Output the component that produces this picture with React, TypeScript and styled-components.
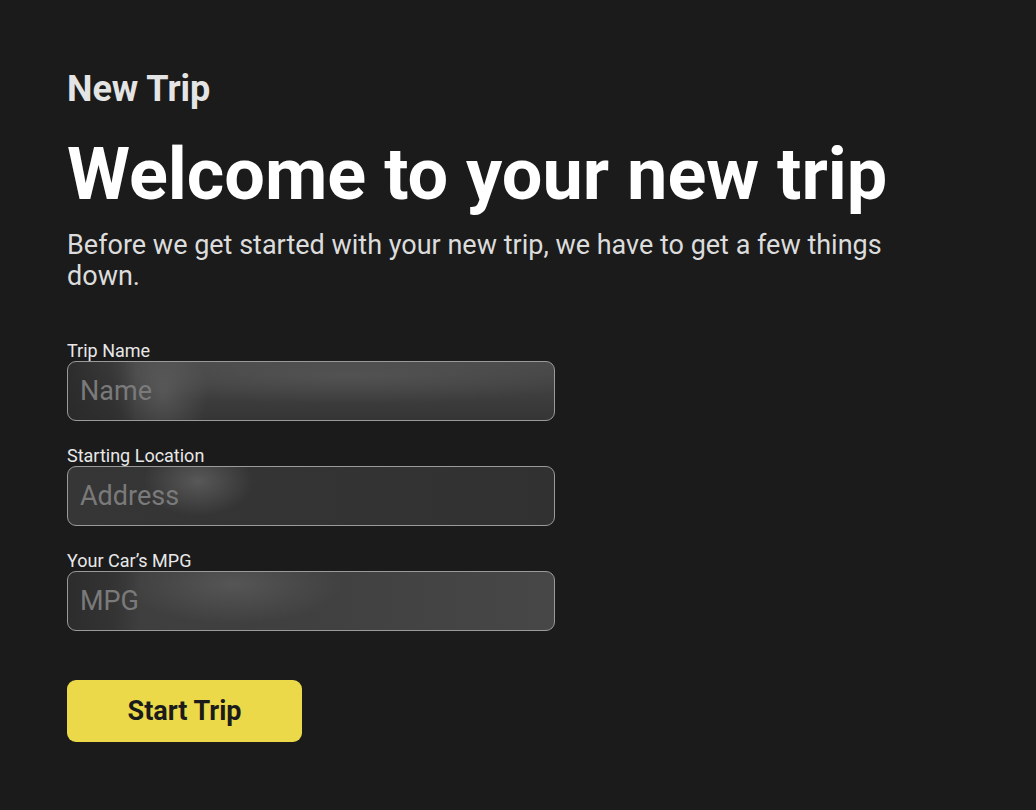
import React from "react";
import styled, { createGlobalStyle } from "styled-components";

const GlobalStyle = createGlobalStyle`
  html, body {
    margin: 0;
    padding: 0;
    background: #1b1b1b;
  }
  body {
    font-family: Roboto, "Liberation Sans", Arial, sans-serif;
    color: #e6e6e6;
  }
`;

const Page = styled.main`
  min-height: 810px;
  box-sizing: border-box;
  padding: 68px 67px 40px;
  display: flex;
  flex-direction: column;
  align-items: flex-start;
`;

const Eyebrow = styled.h2`
  margin: 0;
  font-size: 36px;
  font-weight: 700;
  line-height: 42px;
  color: #e4e4e4;
`;

const Headline = styled.h1`
  margin: 23px 0 0;
  font-size: 72px;
  font-weight: 700;
  line-height: 84px;
  color: #ffffff;
`;

const Intro = styled.p`
  margin: 13px 0 0;
  max-width: 830px;
  font-size: 27px;
  line-height: 31px;
  color: #dcdcdc;
`;

const Form = styled.form`
  margin-top: 48px;
  display: flex;
  flex-direction: column;
  gap: 24px;
  width: 488px;
`;

const Field = styled.label`
  display: flex;
  flex-direction: column;
`;

const FieldLabel = styled.span`
  font-size: 18px;
  line-height: 21px;
  color: #e8e8e8;
`;

const glows: Record<string, string> = {
  name: `
    linear-gradient(90deg, rgba(40,40,40,0.85) 0%, rgba(40,40,40,0.5) 9%, rgba(40,40,40,0) 14%),
    radial-gradient(ellipse 45px 60px at 95px 30px, rgba(105,105,105,0.55), transparent),
    radial-gradient(ellipse 260px 28px at 280px 14px, rgba(95,95,95,0.5), transparent),
    linear-gradient(180deg, #4a4a4a 0%, #3d3d3d 60%, #353535 100%)
  `,
  address: `
    radial-gradient(ellipse 55px 35px at 130px 14px, rgba(100,100,100,0.75), transparent),
    linear-gradient(90deg, #363636 0%, #313131 100%)
  `,
  mpg: `
    linear-gradient(90deg, rgba(40,40,40,0.8) 0%, rgba(40,40,40,0.5) 9%, rgba(40,40,40,0) 15%),
    radial-gradient(ellipse 110px 40px at 165px 12px, rgba(100,100,100,0.6), transparent),
    linear-gradient(90deg, #3e3e3e 0%, #404040 50%, #474747 100%)
  `,
};

const TextInput = styled.input<{ $glow: string }>`
  box-sizing: border-box;
  width: 488px;
  height: 60px;
  padding: 0 12px;
  border: 1.5px solid #9a9a9a;
  border-radius: 9px;
  background: ${(p) => glows[p.$glow]};
  font-family: inherit;
  font-size: 27px;
  color: #eeeeee;
  outline: none;

  &::placeholder {
    color: #7a7a7a;
  }
`;

const StartButton = styled.button`
  margin-top: 49px;
  width: 235px;
  height: 62px;
  border: none;
  border-radius: 9px;
  background: #ebd94a;
  color: #1b1b1b;
  font-family: inherit;
  font-size: 27px;
  font-weight: 700;
  cursor: pointer;
`;

const fields = [
  { label: "Trip Name", placeholder: "Name", glow: "name" },
  { label: "Starting Location", placeholder: "Address", glow: "address" },
  { label: "Your Car\u2019s MPG", placeholder: "MPG", glow: "mpg" },
];

export default function App() {
  return (
    <>
      <GlobalStyle />
      <Page>
        <Eyebrow>New Trip</Eyebrow>
        <Headline>Welcome to your new trip</Headline>
        <Intro>
          Before we get started with your new trip, we have to get a few things
          down.
        </Intro>
        <Form onSubmit={(e) => e.preventDefault()}>
          {fields.map((f) => (
            <Field key={f.label}>
              <FieldLabel>{f.label}</FieldLabel>
              <TextInput placeholder={f.placeholder} $glow={f.glow} />
            </Field>
          ))}
        </Form>
        <StartButton type="button">Start Trip</StartButton>
      </Page>
    </>
  );
}
